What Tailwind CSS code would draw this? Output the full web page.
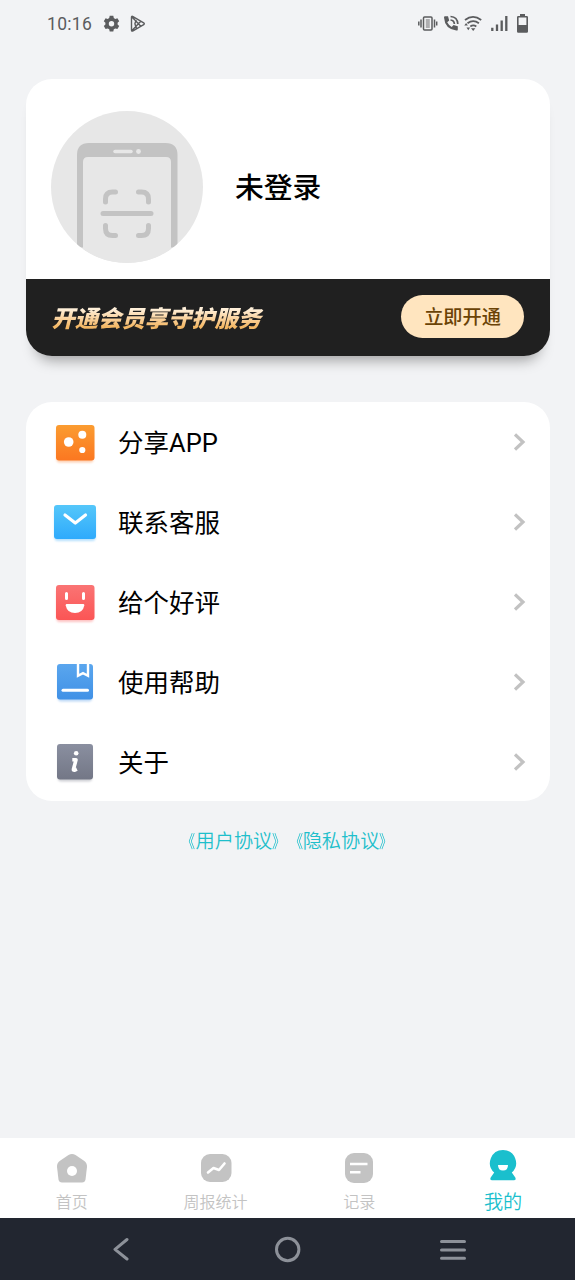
<!DOCTYPE html>
<html lang="zh-CN">
<head>
<meta charset="utf-8">
<title>我的</title>
<script src="https://cdn.jsdelivr.net/npm/@tailwindcss/browser@4"></script>
</head>
<body class="bg-[#f2f3f5] font-['Noto_Sans_CJK_SC',sans-serif] text-black">
<div class="flex h-[1280px] w-[575px] flex-col overflow-hidden">

  <!-- Status bar -->
  <header class="flex h-[79px] shrink-0 items-start justify-between pl-[47px] pr-[46px] text-[#5b5c5e]">
    <div class="flex h-12 items-center">
      <span class="w-[55px] font-[Roboto,sans-serif] text-[17.5px] tracking-[0.3px]">10:16</span>
      <svg class="h-12 w-[50px]" viewBox="102 0 50 48" fill="none">
        <path fill="currentColor" fill-rule="evenodd" d="M109.700 15.800h3.600l.5 2.200 1.500.9 2.100-.7 1.800 3.100-1.600 1.500v1.700l1.600 1.500-1.800 3.100-2.100-.7-1.500.9-.5 2.200h-3.600l-.5-2.200-1.500-.9-2.100.7-1.800-3.100 1.600-1.500v-1.700l-1.600-1.500 1.800-3.100 2.100.7 1.500-.9zM111.500 21a2.700 2.700 0 1 0 0 5.400 2.700 2.700 0 0 0 0-5.400z"/>
        <path stroke="currentColor" stroke-width="1.400" stroke-linejoin="round" d="M131.500 17.300v12.800q0 1.600 1.500.8l10.700-6.200q1.200-.9 0-1.800L133 16.600q-1.500-.8-1.500.7zM132 17l8.800 9.300M132 30.500l8.800-9.300M136.500 18.700l-1.600 5 1.600 5"/>
      </svg>
    </div>
    <svg class="h-12 w-[114px]" viewBox="415 0 114 48" fill="none" stroke="currentColor">
      <rect x="423.500" y="17" width="8.500" height="13" rx="1" stroke-width="1.500"/>
      <path stroke-width="4" stroke-opacity=".45" d="M427.800 19v9"/>
      <path stroke-width="1.500" d="M421 19.500v8M434.500 19.500v8M418.800 21.500v4M436.700 21.500v4"/>
      <path fill="currentColor" stroke="none" d="M445 16.200h3l1.200 4.400-2 1.700q1.500 3 4.500 4.700l1.800-2 4.300 1.200v3.200q0 1.300-1.500 1.200-11.500-1.500-12.300-13 0-1.400 1-1.400z"/>
      <path stroke-width="1.700" d="M450.500 16.500q7 .3 7.300 7.500M450.500 20q3.600.3 3.900 4"/>
      <path stroke-width="1.800" d="M465 20q8-6.300 16.200 0M467.500 23.300q5.800-4.300 11.400 0M470.300 26.500q3-2.200 6 0"/>
      <path fill="currentColor" stroke="none" d="M471 28.200h4.400l-2.200 2.700zM464.300 25.500l1.800-2.500 1.800 2.500zM466.500 27.500h3.600l-1.800 2.800z"/>
      <path stroke-width="2.300" d="M492.300 27.700V31M497 24.500V31M501.700 20.500V31M506.300 16V31"/>
      <path fill="currentColor" stroke="none" fill-rule="evenodd" d="M520 14h5v2h1.700q1.300 0 1.300 1.300v14.200q0 1.300-1.300 1.300h-8.400q-1.300 0-1.300-1.300V17.300q0-1.300 1.300-1.300h1.700zM518.600 17.600v7.400h7.800v-7.400z"/>
    </svg>
  </header>

  <main class="flex flex-1 flex-col px-[25.5px]">
    <!-- Profile -->
    <section class="flex h-[277px] shrink-0 flex-col overflow-hidden rounded-[26px] bg-white shadow-[0_14px_14px_-10px_rgba(0,0,0,0.36)]">
      <div class="flex h-[200px] items-center gap-[32px] pl-[25.500px] pt-[15px]">
        <svg class="size-[152px]" viewBox="51 111 152 152">
          <defs><clipPath id="disc"><circle cx="127" cy="187" r="76"/></clipPath></defs>
          <circle cx="127" cy="187" r="76" fill="#e7e7e7"/>
          <g clip-path="url(#disc)">
            <path fill="#c3c3c3" d="M77 247.500V155q0-12 12-12h76.500q12 0 12 12v92.500z"/>
            <path fill="#e7e7e7" d="M83 270V162q0-5 5-5h78q5 0 5 5v108z"/>
          </g>
          <path stroke="#e7e7e7" stroke-width="3.500" stroke-linecap="round" d="M115 151.500h16"/>
          <circle cx="138.500" cy="151.500" r="2.400" fill="#e7e7e7"/>
          <path fill="none" stroke="#c3c3c3" stroke-width="5" stroke-linecap="round" d="M103 213.500h48M105.500 202v-3q0-7 7-7h3M138.500 192h3q7 0 7 7v3M105.500 225.500v3q0 7 7 7h3M138.500 235.500h3q7 0 7-7v-3"/>
        </svg>
        <h1 class="pb-px text-[28.800px] font-medium leading-none">未登录</h1>
      </div>
      <div class="flex flex-1 items-center justify-between bg-[#202020] pb-[2px] pl-[26px] pr-[25.500px]">
        <p class="bg-linear-to-b from-[#fff0da] from-25% to-[#f4b865] to-80% bg-clip-text pr-1 text-[23.300px] font-black italic leading-8 text-transparent">开通会员享守护服务</p>
        <button class="h-[43px] w-[123px] rounded-full bg-[#ffe5bf] text-[19.200px] font-medium text-[#6b4306]">立即开通</button>
      </div>
    </section>

    <!-- Menu -->
    <nav class="mt-[46px] grid h-[399px] shrink-0 grid-rows-[repeat(5,80px)] rounded-[26px] bg-white pl-[24.500px] pr-[24px] text-[25.500px]">
      <a class="flex items-center">
        <svg class="mr-[20px] size-12" viewBox="50 418 48 48">
          <defs><linearGradient id="orange" x2="0" y2="1"><stop stop-color="#fb9c30"/><stop offset="1" stop-color="#fb7721"/></linearGradient></defs>
          <rect x="56.500" y="429" width="37" height="33.500" rx="3" fill="#fb7721" opacity=".35" class="blur-[0.8px]"/>
          <rect x="56" y="425" width="38.500" height="35.500" rx="3" fill="url(#orange)"/>
          <g fill="#fff"><circle cx="68.700" cy="442" r="4.800"/><circle cx="82.300" cy="434.800" r="4"/><circle cx="82.300" cy="450" r="3.100"/></g>
        </svg>
        <span class="flex-1">分享<span class="font-[Roboto,sans-serif]">APP</span></span>
        <svg class="h-5 w-3" viewBox="0 0 12 20" fill="none" stroke="#c2c2c2" stroke-width="3.200"><path d="M1 2.500l8 7.500-8 7.500"/></svg>
      </a>
      <a class="flex items-center">
        <svg class="mr-[20px] size-12" viewBox="50 498 48 48">
          <defs><linearGradient id="sky" x2="0" y2="1"><stop stop-color="#55c7fa"/><stop offset="1" stop-color="#2eaafc"/></linearGradient></defs>
          <rect x="54.500" y="510" width="41" height="31" rx="3" fill="#2eaafc" opacity=".35" class="blur-[0.8px]"/>
          <rect x="54" y="505" width="42" height="34" rx="3" fill="url(#sky)"/>
          <path fill="none" stroke="#fff" stroke-width="3.200" stroke-linecap="round" stroke-linejoin="round" d="M65 515l10.300 8 10.200-8"/>
        </svg>
        <span class="flex-1 pb-[2px]">联系客服</span>
        <svg class="h-5 w-3" viewBox="0 0 12 20" fill="none" stroke="#c2c2c2" stroke-width="3.200"><path d="M1 2.500l8 7.500-8 7.500"/></svg>
      </a>
      <a class="flex items-center">
        <svg class="mr-[20px] size-12" viewBox="50 578 48 48">
          <defs><linearGradient id="coral" x2="0" y2="1"><stop stop-color="#fa7474"/><stop offset="1" stop-color="#fb5555"/></linearGradient></defs>
          <rect x="56.500" y="589" width="37" height="33" rx="3" fill="#fb5555" opacity=".35" class="blur-[0.8px]"/>
          <rect x="56" y="585" width="38.500" height="35" rx="3" fill="url(#coral)"/>
          <path stroke="#fff" stroke-width="3" stroke-linecap="round" d="M66.500 593.500v5M83.500 593.500v5"/>
          <path fill="#fff" d="M66.500 604h17q1 0 .8 1.500-1.500 7.500-9.300 7.500t-9.300-7.500q-.2-1.500.8-1.500z"/>
        </svg>
        <span class="flex-1 pb-[2px]">给个好评</span>
        <svg class="h-5 w-3" viewBox="0 0 12 20" fill="none" stroke="#c2c2c2" stroke-width="3.200"><path d="M1 2.500l8 7.500-8 7.500"/></svg>
      </a>
      <a class="flex items-center">
        <svg class="mr-[20px] size-12" viewBox="50 658 48 48">
          <defs><linearGradient id="azure" x2="0" y2="1"><stop stop-color="#5aa6ee"/><stop offset="1" stop-color="#4091e6"/></linearGradient></defs>
          <rect x="58" y="669" width="34" height="32.500" rx="3" fill="#4091e6" opacity=".35" class="blur-[0.8px]"/>
          <rect x="57" y="664" width="36" height="35.500" rx="3" fill="url(#azure)"/>
          <path fill="none" stroke="#fff" stroke-width="2.400" d="M78 664v11.800l5-2.600 5 2.600V664"/>
          <path stroke="#fff" stroke-width="3" stroke-linecap="round" d="M63 690.300h24.500"/>
        </svg>
        <span class="flex-1 pb-[2px]">使用帮助</span>
        <svg class="h-5 w-3" viewBox="0 0 12 20" fill="none" stroke="#c2c2c2" stroke-width="3.200"><path d="M1 2.500l8 7.500-8 7.500"/></svg>
      </a>
      <a class="flex items-center">
        <svg class="mr-[20px] size-12" viewBox="50 738 48 48">
          <defs><linearGradient id="slate" x2="0" y2="1"><stop stop-color="#8a8fa0"/><stop offset="1" stop-color="#737786"/></linearGradient></defs>
          <rect x="58" y="748" width="34" height="33.500" rx="3" fill="#737786" opacity=".35" class="blur-[0.8px]"/>
          <rect x="57" y="744" width="36" height="35.500" rx="3" fill="url(#slate)"/>
          <circle cx="76.200" cy="753.300" r="2.300" fill="#fff"/>
          <path fill="none" stroke="#fff" stroke-width="3.600" stroke-linejoin="round" d="M72.300 759.800h3.700l-2.500 9.500q-.2 1.300 1.200.9l2.200-1"/>
        </svg>
        <span class="flex-1 pb-[2px]">关于</span>
        <svg class="h-5 w-3" viewBox="0 0 12 20" fill="none" stroke="#c2c2c2" stroke-width="3.200"><path d="M1 2.500l8 7.500-8 7.500"/></svg>
      </a>
    </nav>

    <p class="mt-[23px] flex justify-center text-[19.200px] font-[350] leading-8 text-[#1fbfcb] [text-spacing-trim:space-all]">
      <span class="w-[15.2px] origin-right scale-x-88 scale-y-115 text-[15.2px]">《</span><span>用户协议</span><span class="w-[15.2px] origin-left scale-x-88 scale-y-115 text-[15.2px]">》</span><span class="w-[15.2px] origin-right scale-x-88 scale-y-115 text-[15.2px]">《</span><span>隐私协议</span><span class="w-[15.2px] origin-left scale-x-88 scale-y-115 text-[15.2px]">》</span>
    </p>
  </main>

  <!-- Tab bar -->
  <nav class="grid h-20 shrink-0 grid-cols-4 bg-white text-[16px] font-[350] leading-6 text-[#c3c3c3]">
    <a class="flex flex-col items-center pt-[10px]">
      <svg class="h-[41px] w-10" viewBox="52 1148 40 41">
        <path fill="currentColor" d="M68.500 1155q3.500-2 7 0l8.500 5.700q3.300 2.300 3 6.300l-1.500 12.500q-.5 3-3.500 3H62q-3 0-3.500-3L57 1167q-.3-4 3-6.300z"/>
        <circle cx="72" cy="1171" r="5" fill="#fff"/>
      </svg>
      <span>首页</span>
    </a>
    <a class="flex flex-col items-center pt-[10px]">
      <svg class="h-[41px] w-10" viewBox="195.500 1148 40 41">
        <rect x="200.500" y="1154" width="30.500" height="28" rx="9" fill="currentColor"/>
        <path fill="none" stroke="#fff" stroke-width="2.600" stroke-linecap="round" stroke-linejoin="round" d="M207.500 1172.500l5.500-4.500 5.500 2 5.500-6.500"/>
      </svg>
      <span>周报统计</span>
    </a>
    <a class="flex flex-col items-center pt-[10px]">
      <svg class="h-[41px] w-10" viewBox="339.500 1148 40 41">
        <rect x="345.500" y="1153" width="28" height="30" rx="9" fill="currentColor"/>
        <path stroke="#fff" stroke-width="2.500" d="M350.500 1164h17.500M350.500 1172.300h10.500"/>
      </svg>
      <span>记录</span>
    </a>
    <a class="flex flex-col items-center pt-[10px] text-[19.200px] text-[#1abfcd]">
      <svg class="h-[41px] w-10" viewBox="483 1148 40 41">
        <path fill="currentColor" d="M503 1150a13 13 0 0 1 8.800 22.600l3.500 5q1.200 2.600-1.500 2.600h-21.600q-2.700 0-1.500-2.600l3.500-5A13 13 0 0 1 503 1150z"/>
        <path fill="#fff" d="M498 1165h10q0 5.500-5 5.500t-5-5.500z"/>
      </svg>
      <span>我的</span>
    </a>
  </nav>

  <!-- System navigation -->
  <footer class="h-[62px] shrink-0 bg-[#222630]">
    <svg class="h-[62px] w-[575px]" viewBox="0 1218 575 62" fill="none" stroke="#8d9199" stroke-width="3" stroke-linecap="round" stroke-linejoin="round">
      <path d="M127 1239.500l-12 9.800 12 9.700M441.500 1241.500h23M441.500 1250h23M441.500 1258.300h23"/>
      <circle cx="287.700" cy="1249.500" r="11.200"/>
    </svg>
  </footer>
</div>
</body>
</html>
